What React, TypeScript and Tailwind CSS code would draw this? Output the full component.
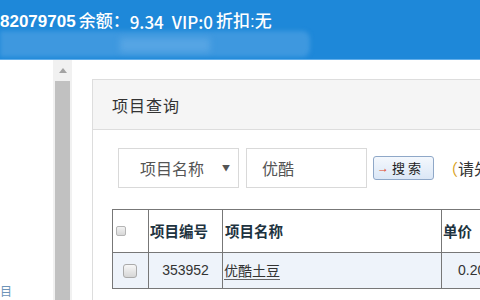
import React from "react";

const cjk = { fontFamily: '"Noto Sans CJK SC", "Liberation Sans", sans-serif' };
const mixed = { fontFamily: '"Liberation Sans", "Noto Sans CJK SC", sans-serif' };

export default function App() {
  return (
    <div className="w-[480px] h-[300px] overflow-hidden bg-white flex flex-col" style={cjk}>
      {/* Header */}
      <div className="relative h-[60px] shrink-0 bg-[#1e88d9] border-b border-[#62aeea] overflow-hidden">
        <div className="absolute left-0 top-[31px] w-[310px] h-[26px] bg-[#3e98df] blur-[2px] rounded-r-[8px]" />
        <div className="absolute left-[120px] top-[38px] w-[90px] h-[14px] bg-[#56a5e4] blur-[3px]" />
        <div className="relative flex items-center h-[32px] pt-[12px] text-white text-[17px] whitespace-nowrap" style={mixed}>
          <span className="font-bold">82079705</span>
          <span className="ml-[3px] font-medium">余额：</span>
          <span className="font-medium" style={cjk}>9.34</span>
          <span className="ml-[8px] font-medium" style={cjk}>VIP:0</span>
          <span className="ml-[3px] font-medium">折扣:无</span>
        </div>
      </div>

      <div className="flex flex-1 min-h-0">
        {/* Left menu */}
        <div className="relative w-[53px] shrink-0 bg-white">
          <span className="absolute left-0 bottom-[3px] text-[12px] text-[#6d94b8] leading-none">目</span>
        </div>
        {/* Scrollbar */}
        <div className="w-[19px] shrink-0 bg-[#f1f1f1] flex flex-col items-center">
          <div className="h-[21px] w-full flex items-center justify-center">
            <div className="w-0 h-0 border-l-[4px] border-r-[4px] border-b-[5px] border-l-transparent border-r-transparent border-b-[#a3a3a3]" />
          </div>
          <div className="flex-1 w-[15px] bg-[#c1c1c1]" />
        </div>
        {/* Content */}
        <div className="flex-1 min-w-0 bg-white pl-[20px] pt-[19px] overflow-hidden">
          <div className="w-[440px] h-[260px] border border-[#dddddd] bg-white overflow-hidden">
            <div className="h-[50px] bg-[#f5f5f5] border-b border-[#dddddd] flex items-center pl-[19px] text-[16px] tracking-[1px] text-[#333]">
              项目查询
            </div>
            <div className="pl-[25px] pt-[18px]">
              <div className="flex items-center whitespace-nowrap">
                <div className="shrink-0 w-[121px] h-[40px] border border-[#d9d9d9] bg-white flex items-center pl-[21px] text-[16px] text-[#555]">
                  <span>项目名称</span>
                  <span className="ml-[18px] text-[8px] text-[#555]">▼</span>
                </div>
                <div className="shrink-0 ml-[7px] w-[121px] h-[40px] border border-[#d9d9d9] bg-white flex items-center pl-[15px] text-[16px] text-[#555]">
                  优酷
                </div>
                <div className="shrink-0 ml-[6px] w-[61px] h-[24px] rounded-[3px] border border-[#8fa8c8] bg-gradient-to-b from-[#f4f8fd] to-[#dbe7f6] flex items-center pl-[3px] text-[13px] text-[#222]">
                  <span className="text-[#e0401a] text-[12px] mr-[3px]" style={mixed}>→</span>
                  <span className="tracking-[3px]">搜索</span>
                </div>
                <div className="shrink-0 ml-[8px] text-[16px] text-[#333]">
                  <span className="text-[#d9a21b]">（</span>请先选择
                </div>
              </div>

              <table className="ml-[-6px] mt-[21px] border-collapse w-[420px] table-fixed">
                <colgroup>
                  <col className="w-[36px]" />
                  <col className="w-[74px]" />
                  <col className="w-[219px]" />
                  <col />
                </colgroup>
                <tbody>
                  <tr className="h-[43px] bg-white">
                    <td className="border border-[#777] align-middle">
                      <div className="ml-[3px] w-[10px] h-[10px] rounded-[2px] border border-[#b5b5b5] bg-gradient-to-b from-[#f2f2f2] to-[#d8d8d8]" />
                    </td>
                    <td className="border border-[#777] text-[14.5px] font-bold text-[#1e3340] pl-[1px] whitespace-nowrap">项目编号</td>
                    <td className="border border-[#777] text-[14.5px] font-bold text-[#1e3340] pl-[2px]">项目名称</td>
                    <td className="border border-[#777] text-[14.5px] font-bold text-[#1e3340] pl-[1px] whitespace-nowrap">单价</td>
                  </tr>
                  <tr className="h-[36px] bg-[#eef3fa]">
                    <td className="border border-[#777] align-middle">
                      <div className="ml-[10px] w-[14px] h-[14px] rounded-[3px] border border-[#aaa] bg-gradient-to-b from-[#f7f7f7] to-[#d6d6d6]" />
                    </td>
                    <td className="border border-[#777] text-[14px] text-[#333] text-center" style={mixed}>353952</td>
                    <td className="border border-[#777] text-[14px] text-[#333] pl-[1px]">
                      <span className="underline underline-offset-[3px] decoration-[#666]">优酷土豆</span>
                    </td>
                    <td className="border border-[#777] text-[14px] text-[#333] pl-[16px] whitespace-nowrap" style={mixed}>0.20</td>
                  </tr>
                </tbody>
              </table>
            </div>
          </div>
        </div>
      </div>
    </div>
  );
}
